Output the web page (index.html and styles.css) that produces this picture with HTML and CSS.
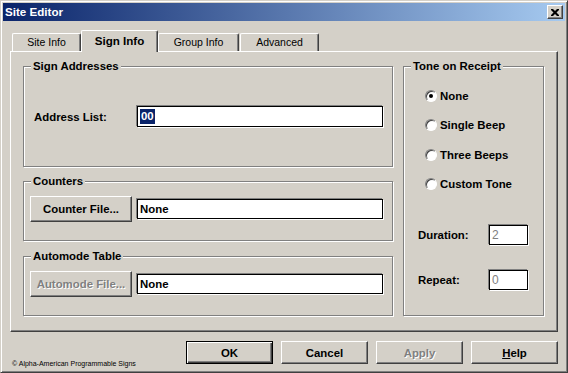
FILE: index.html
```html
<!DOCTYPE html>
<html>
<head>
<meta charset="utf-8">
<title>Site Editor</title>
<link rel="stylesheet" href="styles.css">
</head>
<body>
<div class="window">
  <div class="titlebar">
    <span class="title">Site Editor</span>
    <span class="close"><svg width="8" height="7" viewBox="0 0 8 7"><path d="M0 0h2l2 2 2-2h2v1l-2.5 2.5L8 6v1H6L4 5 2 7H0V6l2.5-2.5L0 1z" fill="#000"/></svg></span>
  </div>
  <div class="tabs">
    <div class="tab t-site">Site Info</div>
    <div class="tab t-sign active">Sign Info</div>
    <div class="tab t-group">Group Info</div>
    <div class="tab t-adv">Advanced</div>
  </div>
  <div class="panel">
    <div class="left-col">
      <div class="group g-addr">
        <div class="legend">Sign Addresses</div>
        <div class="row addr-row">
          <span class="label lbl-addr">Address List:</span>
          <div class="input in-wide in-addr"><span class="sel">00</span></div>
        </div>
      </div>
      <div class="group g-count">
        <div class="legend">Counters</div>
        <div class="row file-row">
          <div class="button file-btn">Counter File...</div>
          <div class="input in-wide">None</div>
        </div>
      </div>
      <div class="group g-auto">
        <div class="legend">Automode Table</div>
        <div class="row file-row">
          <div class="button file-btn disabled">Automode File...</div>
          <div class="input in-wide">None</div>
        </div>
      </div>
    </div>
    <div class="group g-tone">
      <div class="legend">Tone on Receipt</div>
      <div class="radios">
        <div class="radio-row"><span class="radio checked"></span>None</div>
        <div class="radio-row"><span class="radio"></span>Single Beep</div>
        <div class="radio-row"><span class="radio"></span>Three Beeps</div>
        <div class="radio-row"><span class="radio"></span>Custom Tone</div>
      </div>
      <div class="num-row dur-row"><span class="label lbl-num">Duration:</span><div class="input in-num">2</div></div>
      <div class="num-row rep-row"><span class="label lbl-num">Repeat:</span><div class="input in-num">0</div></div>
    </div>
  </div>
  <div class="footer">
    <span class="copy">© Alpha-American Programmable Signs</span>
    <div class="buttons">
      <div class="button dlg-btn default">OK</div>
      <div class="button dlg-btn">Cancel</div>
      <div class="button dlg-btn disabled">Apply</div>
      <div class="button dlg-btn"><u>H</u>elp</div>
    </div>
  </div>
</div>
</body>
</html>
```

FILE: styles.css
```css
* { box-sizing: border-box; }
html, body { margin: 0; padding: 0; }
body {
  width: 568px;
  height: 373px;
  background: #d4d0c8;
  font-family: "Liberation Sans", Arial, sans-serif;
  font-size: 11.4px;
  font-weight: bold;
  color: #000;
  overflow: hidden;
}
.window {
  width: 568px;
  height: 373px;
  background: #d4d0c8;
  border: 1px solid;
  border-color: #d4d0c8 #404040 #404040 #d4d0c8;
  box-shadow: inset 1px 1px #fff, inset -1px -1px #808080;
  padding: 2px;
  display: flex;
  flex-direction: column;
}
.titlebar {
  height: 18px;
  flex: none;
  background: linear-gradient(to right, #0a246a, #a6caf0);
  display: flex;
  align-items: center;
  justify-content: space-between;
  padding: 0 2px 0 2px;
  color: #fff;
  font-size: 11.6px;
}
.title { line-height: 14px; }
.close {
  width: 16px;
  height: 14px;
  background: #d4d0c8;
  border: 1px solid;
  border-color: #fff #404040 #404040 #fff;
  box-shadow: inset -1px -1px #808080;
  display: flex;
  align-items: center;
  justify-content: center;
}
.close svg { display: block; }

.tabs {
  height: 30px;
  flex: none;
  display: flex;
  align-items: flex-end;
  padding-left: 9px;
}
.tab {
  height: 18px;
  border-top: 1px solid #fff;
  border-left: 1px solid #fff;
  border-right: 1px solid #404040;
  box-shadow: inset -1px 0 #808080;
  border-radius: 2px 2px 0 0;
  font-weight: normal;
  font-size: 10.5px;
  line-height: 16px;
  text-align: center;
  background: #d4d0c8;
}
.t-site { width: 69px; }
.t-sign { width: 77px; }
.t-group { width: 81px; }
.t-adv { width: 79px; margin-left: 1px; }
.tab.active {
  height: 22px;
  margin-bottom: -1px;
  position: relative;
  z-index: 1;
  font-weight: bold;
  font-size: 11.6px;
  line-height: 19px;
}

.panel {
  height: 281px;
  flex: none;
  margin: 0 7px;
  border: 1px solid;
  border-color: #fff #404040 #404040 #fff;
  box-shadow: inset -1px -1px #808080;
  padding: 14px 0 0 12px;
  display: flex;
  align-items: flex-start;
}
.left-col {
  width: 370px;
  display: flex;
  flex-direction: column;
}
.group {
  border: 1px solid #808080;
  box-shadow: inset 1px 1px #fff, 1px 1px #fff;
}
.legend {
  width: max-content;
  margin: -8px 0 0 7px;
  padding: 0 2px;
  line-height: 14px;
  height: 14px;
  background: #d4d0c8;
}
.g-addr { height: 101px; }
.g-count { height: 60px; margin-top: 14px; }
.g-auto { height: 60px; margin-top: 15px; }
.g-tone { width: 141px; height: 250px; margin-left: 10px; }

.row { display: flex; align-items: center; }
.addr-row { margin-top: 33px; padding-left: 10px; }
.lbl-addr { width: 103px; }
.file-row { margin-top: 8px; padding-left: 6px; }

.input {
  background: #fff;
  border: 1px solid #000;
  box-shadow: -1px -1px 0 #808080, 1px 1px 0 #fff;
  padding: 0 2px;
  display: flex;
  align-items: center;
}
.in-wide { width: 246px; height: 20px; }
.in-addr { height: 21px; }
.file-row .in-wide { margin-left: 5px; }
.sel {
  background: #0a246a;
  color: #fff;
  line-height: 15px;
  padding: 0 1px;
}

.button {
  background: #d4d0c8;
  border: 1px solid;
  border-color: #fff #404040 #404040 #fff;
  box-shadow: inset -1px -1px #808080;
  display: flex;
  align-items: center;
  justify-content: center;
}
.file-btn { width: 102px; height: 26px; }
.disabled { color: #808080; text-shadow: 1px 1px 0 #fff; }

.radios { padding-left: 21px; margin-top: 15px; display: flex; flex-direction: column; gap: 13.3px; }
.radio-row { height: 16px; display: flex; align-items: center; }
.radio {
  width: 12px;
  height: 12px;
  border-radius: 50%;
  background: #fff;
  border: 1px solid;
  border-color: #808080 #fff #fff #808080;
  box-shadow: inset 1px 1px #404040;
  margin-right: 3px;
  display: flex;
  align-items: center;
  justify-content: center;
}
.radio.checked::after {
  content: "";
  width: 4px;
  height: 4px;
  border-radius: 50%;
  background: #000;
}
.num-row { display: flex; align-items: center; padding-left: 14px; height: 20px; }
.dur-row { margin-top: 33px; }
.rep-row { margin-top: 25px; }
.lbl-num { width: 71px; }
.in-num { width: 39px; height: 20px; color: #808080; font-weight: normal; font-size: 12px; }

.footer {
  display: flex;
  align-items: flex-start;
  justify-content: space-between;
  padding: 9px 7px 0 9px;
}
.copy {
  font-size: 7px;
  font-weight: normal;
  line-height: 8px;
  margin-top: 19px;
}
.buttons { display: flex; gap: 8px; }
.dlg-btn { width: 87px; height: 23px; }
.dlg-btn.default {
  border: 1px solid #000;
  box-shadow: inset 1px 1px #fff, inset -1px -1px #404040, inset -2px -2px #808080;
}
```
